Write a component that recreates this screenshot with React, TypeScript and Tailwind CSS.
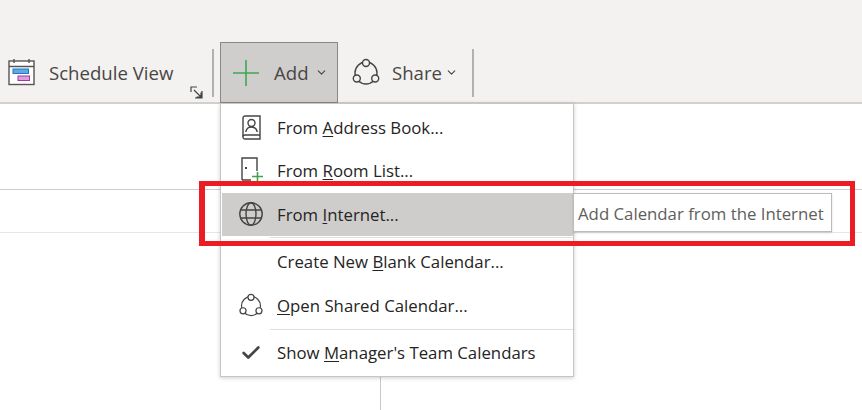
import React from "react";
import { Check, ChevronDown } from "lucide-react";

const font = "font-['Open_Sans',sans-serif]";

const ShareIcon = ({ size = 30, bg = "#fff" }: { size?: number; bg?: string }) => (
  <svg width={size} height={size} viewBox="0 0 30 30" fill="none" stroke="#444" strokeWidth="1.4">
    <circle cx="15" cy="15" r="11" />
    <circle cx="15" cy="5" r="3.5" fill={bg} />
    <circle cx="5.8" cy="20.5" r="3.5" fill={bg} />
    <circle cx="24.2" cy="20.5" r="3.5" fill={bg} />
  </svg>
);

const ScheduleIcon = () => (
  <svg width="28" height="28" viewBox="0 0 28 28" fill="none">
    <rect x="1" y="3" width="25" height="23.5" fill="#fff" stroke="#555" strokeWidth="1.4" />
    <path d="M1 8.5H26M6 1V5M21 1V5" stroke="#555" strokeWidth="1.4" />
    <rect x="5" y="11" width="15.5" height="4.5" fill="#5fa8e0" stroke="#1e78c8" />
    <rect x="10" y="18" width="11.5" height="4.5" fill="#d9a0d9" stroke="#a832a8" />
  </svg>
);

const BookIcon = () => (
  <svg width="20" height="26" viewBox="0 0 20 26" fill="none" stroke="#444" strokeWidth="1.4" className="ml-[2px]">
    <path d="M3 1H18V24H3C1.8 24 1 23 1 22V3C1 2 1.8 1 3 1Z" />
    <path d="M1 21.5C1 20.5 1.8 20 3 20H18" />
    <circle cx="9.5" cy="8" r="3.5" />
    <path d="M3.8 17C4.3 13.8 6.5 12 9.5 12C12.5 12 14.7 13.8 15.2 17" />
  </svg>
);

const DoorIcon = () => (
  <svg width="24" height="26" viewBox="0 0 24 26" fill="none" className="mb-[3px] ml-[3px]">
    <path d="M1 23V1H16V14M1 23H10" stroke="#444" strokeWidth="1.4" />
    <rect x="4" y="10" width="2" height="2" fill="#444" />
    <path d="M16.5 15V24M11 19.5H22" stroke="#3ea34f" strokeWidth="1.6" />
  </svg>
);

const GlobeIcon = () => (
  <svg width="26" height="26" viewBox="0 0 26 26" fill="none" stroke="#444" strokeWidth="1.4">
    <circle cx="13" cy="13" r="11.2" />
    <ellipse cx="13" cy="13" rx="5" ry="11.2" />
    <path d="M3 9H23M3 17H23" />
  </svg>
);

const Row = ({
  icon,
  before,
  ul,
  after,
  active,
  className,
}: {
  icon?: React.ReactNode;
  before: string;
  ul: string;
  after: string;
  active?: boolean;
  className: string;
}) => (
  <div className={`flex items-center ml-[1px] ${active ? "bg-[#cfcdcb]" : ""} ${className}`}>
    <div className="w-[55px] shrink-0 flex justify-center pl-[3px]">{icon}</div>
    <span className="text-[16.8px] text-[#252423] whitespace-nowrap">
      {before}
      <span className="underline underline-offset-2">{ul}</span>
      {after}
    </span>
  </div>
);

export default function App() {
  return (
    <div className={`relative w-[862px] h-[410px] overflow-hidden bg-white ${font}`}>
      {/* Ribbon */}
      <div className="h-[104px] bg-[#f3f2f1] border-b-2 border-[#d2d0ce] pt-[42px] pl-[8px] flex items-start">
        <div className="w-[204px] h-[60px] flex items-start pt-[16px] relative">
          <ScheduleIcon />
          <span className="ml-[13px] text-[18.6px] leading-[30px] text-[#484644] whitespace-nowrap">Schedule View</span>
          <svg className="absolute left-[182px] top-[44px]" width="13" height="13" viewBox="0 0 13 13" fill="none" stroke="#444" strokeWidth="1.2">
            <path d="M12 5V12H5M1 6V1H7M4 4L11 11M11 6.5V11H6.5" />
          </svg>
        </div>
        <div className="w-[2px] h-[48px] mt-[7px] bg-[#b3b0ad]" />
        <div className="ml-[6px] w-[118px] h-[61px] bg-[#d0cecc] border border-[#8a8886] flex items-center pl-[11px]">
          <svg width="28" height="28" viewBox="0 0 28 28" stroke="#3fa654" strokeWidth="1.6">
            <path d="M14 1V27M1 14H27" />
          </svg>
          <span className="ml-[14px] text-[18.6px] text-[#484644]">Add</span>
          <ChevronDown size={13} strokeWidth={2} className="ml-[6px] text-[#444]" />
        </div>
        <div className="ml-[13px] h-[61px] flex items-center">
          <ShareIcon bg="#f3f2f1" />
          <span className="ml-[11px] text-[18.6px] text-[#484644]">Share</span>
          <ChevronDown size={13} strokeWidth={2} className="ml-[3px] text-[#444]" />
        </div>
        <div className="w-[2px] h-[48px] mt-[7px] ml-[14px] bg-[#b3b0ad]" />
      </div>

      {/* Calendar grid lines behind the menu */}
      <div className="absolute left-0 right-0 top-[189px] h-px bg-[#cccccc]" />
      <div className="absolute left-0 right-0 top-[232px] h-px bg-[#e6e6e6]" />
      <div className="absolute left-[380px] top-[370px] bottom-0 w-px bg-[#c8c8c8]" />

      {/* Dropdown menu */}
      <div className="absolute left-[220px] top-[103px] w-[354px] h-[274px] bg-white border border-[#c8c6c4] shadow-[0_1px_4px_rgba(0,0,0,0.2)] flex flex-col pt-[2px]">
        <Row className="h-[44px]" icon={<BookIcon />} before="From " ul="A" after="ddress Book..." />
        <Row className="h-[44px]" icon={<DoorIcon />} before="From " ul="R" after="oom List..." />
        <Row className="h-[44px]" active icon={<GlobeIcon />} before="From " ul="I" after="nternet..." />
        <div className="ml-[49px] h-px mt-[1px] bg-[#e1dfdd]" />
        <Row className="h-[48px]" before="Create New " ul="B" after="lank Calendar..." />
        <Row className="h-[42px]" icon={<ShareIcon size={26} />} before="" ul="O" after="pen Shared Calendar..." />
        <div className="ml-[49px] h-px mt-[2px] bg-[#e1dfdd]" />
        <Row className="h-[47px]" icon={<Check size={22} strokeWidth={3} className="text-[#484644]" />} before="Show " ul="M" after="anager's Team Calendars" />
      </div>

      {/* Tooltip */}
      <div className="absolute left-[573px] top-[193px] w-[259px] h-[39px] bg-white border border-[#bdbbb9] shadow-[0_1px_2px_rgba(0,0,0,0.15)] flex items-center pl-[4px] pt-[2px] text-[16.8px] text-[#605e5c] whitespace-nowrap">
        Add Calendar from the Internet
      </div>

      {/* Red highlight */}
      <div className="absolute left-[199px] top-[181px] w-[656px] h-[65px] border-[5px] border-l-[6px] border-[#ec1c24]" />
    </div>
  );
}
